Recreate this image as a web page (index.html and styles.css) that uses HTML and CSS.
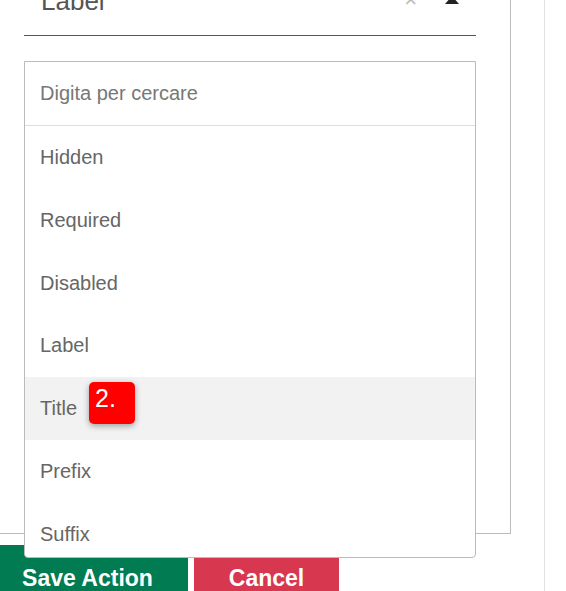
FILE: index.html
```html
<!DOCTYPE html>
<html lang="it">
  <head>
    <meta charset="UTF-8" />
    <meta name="viewport" content="width=device-width, initial-scale=1.0" />
    <title>Action editor</title>
    <link rel="stylesheet" href="styles.css">
  </head>
  <body>
    <div class="page">
      <div class="panel">
        <div class="select">
          <span class="select-value">Label</span>
          <span class="select-clear">&times;</span>
          <span class="select-arrow"></span>
        </div>
      </div>

      <div class="dropdown">
        <div class="search">
          <input type="text" placeholder="Digita per cercare" />
        </div>
        <div class="options">
          <div class="option">Hidden</div>
          <div class="option">Required</div>
          <div class="option">Disabled</div>
          <div class="option">Label</div>
          <div class="option active">
            Title
            <span class="step-badge">2.</span>
          </div>
          <div class="option">Prefix</div>
          <div class="option">Suffix</div>
          <div class="option">Tooltip</div>
        </div>
      </div>

      <div class="actions">
        <button class="btn btn-save">Save Action</button>
        <button class="btn btn-cancel">Cancel</button>
      </div>
    </div>
  </body>
</html>
```

FILE: styles.css
```css
* {
  margin: 0;
  padding: 0;
  box-sizing: border-box;
}

body {
  overflow: hidden;
  font-family: 'Liberation Sans', Arial, sans-serif;
  background-color: #fff;
}

.page {
  position: relative;
  width: 545px;
  height: 100vh;
  overflow: hidden;
  border-right: 1px solid #e2e2e2;
}

.panel {
  width: 511px;
  padding: 0 34px 497px 24px;
  border-right: 1px solid #bbb;
  border-bottom: 1px solid #bbb;
}

.select {
  display: flex;
  align-items: flex-start;
  margin-top: -14px;
  padding: 0 17px 19px 17px;
  border-bottom: 1px solid #555;
}

.select-value {
  flex: 1;
  font-size: 26px;
  line-height: 30px;
  color: #555;
}

.select-clear {
  margin-top: -1px;
  font-size: 22px;
  line-height: 30px;
  color: #bbb;
}

.select-arrow {
  width: 0;
  height: 0;
  margin-top: 10px;
  margin-left: 28px;
  border-left: 7px solid transparent;
  border-right: 7px solid transparent;
  border-bottom: 8px solid #222;
}

.dropdown {
  position: absolute;
  top: 61px;
  left: 24px;
  width: 452px;
  height: 497px;
  overflow: hidden;
  border: 1px solid #bbb;
  border-radius: 0 0 4px 4px;
  background-color: #fff;
}

.search {
  height: 64px;
  border-bottom: 1px solid #ddd;
}

.search input {
  width: 100%;
  height: 62px;
  padding: 0 15px;
  border: none;
  outline: none;
  font-family: inherit;
  font-size: 20px;
  color: #555;
  background: transparent;
}

.search input::placeholder {
  color: #777;
}

.option {
  position: relative;
  height: 62.8px;
  padding: 0 15px;
  line-height: 62.8px;
  font-size: 20px;
  color: #666;
}

.option.active {
  background-color: #f2f2f2;
}

.step-badge {
  position: absolute;
  top: 5px;
  left: 64px;
  width: 46px;
  height: 42px;
  padding: 4px 6px;
  font-size: 25px;
  line-height: 25px;
  color: #fff;
  border-radius: 5px;
  background-color: #ff0000;
  box-shadow: 0 2px 6px rgba(0, 0, 0, 0.35);
}

.actions {
  display: flex;
  align-items: flex-start;
  gap: 6px;
  margin-top: 11px;
  margin-left: -13px;
}

.btn {
  padding: 20px 0;
  border: none;
  font-family: inherit;
  font-size: 23px;
  font-weight: bold;
  line-height: 26px;
  color: #fff;
  text-align: center;
}

.btn-save {
  width: 201px;
  background-color: #017b52;
}

.btn-cancel {
  width: 145px;
  background-color: #d83750;
}
```
